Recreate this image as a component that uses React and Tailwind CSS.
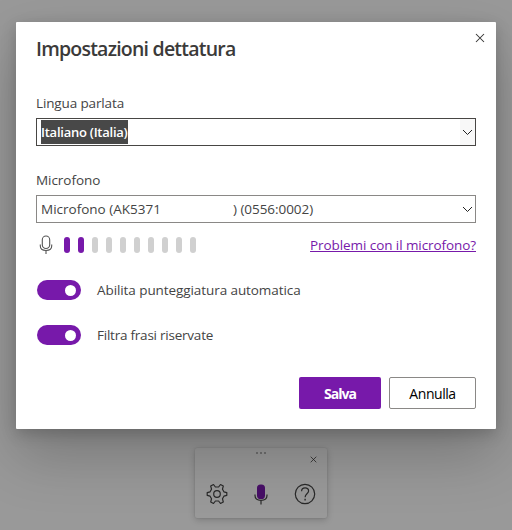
import React from 'react'

const levels = [true, true, false, false, false, false, false, false, false, false]

const toggles = [
  { label: 'Abilita punteggiatura automatica', tracking: 'tracking-[-0.08px]' },
  { label: 'Filtra frasi riservate', tracking: 'tracking-[-0.23px]' },
]

const CloseIcon = ({ size }) => (
  <svg width={size} height={size} viewBox="0 0 10 10" fill="none" stroke="#323130" strokeWidth="1.05">
    <path d="M1 1l8 8M9 1l-8 8" />
  </svg>
)

const ChevronIcon = () => (
  <svg width="11" height="7" viewBox="0 0 11 7" fill="none" stroke="#222" strokeWidth="1">
    <path d="M1 1l4.5 4.5L10 1" />
  </svg>
)

const MicOutline = () => (
  <svg width="14" height="20" viewBox="0 0 14 20" fill="none" stroke="#555" strokeWidth="1.1">
    <rect x="3.3" y="1" width="7.4" height="12.5" rx="3.7" />
    <path d="M1.3 9.5v1.6c0 2.7 2.1 4.4 5.7 4.4s5.7-1.7 5.7-4.4V9.5M7 15.5V19" />
  </svg>
)

const GearIcon = () => (
  <svg width="22" height="22" viewBox="0 0 22 22" fill="none" stroke="#444" strokeWidth="1.2" strokeLinejoin="round">
    <path d="M9.4 4 L7.5 1.5 L4.7 3 L5.5 6.2 L4.1 8.8 L1.2 9.6 V12.4 L4.1 13.2 L5.5 15.8 L4.7 19 L7.5 20.5 L9.4 18 H12.6 L14.5 20.5 L17.3 19 L16.5 15.8 L17.9 13.2 L20.8 12.4 V9.6 L17.9 8.8 L16.5 6.2 L17.3 3 L14.5 1.5 L12.6 4 Z" />
    <circle cx="11" cy="11" r="3.3" />
  </svg>
)

const MicFilled = () => (
  <svg width="14" height="21" viewBox="0 0 14 21" fill="none">
    <rect x="3" y="0.5" width="8" height="14.5" rx="3.6" fill="#7719aa" />
    <path d="M1 10.5v1.1c0 2.9 2.3 4.8 6 4.8s6-1.9 6-4.8v-1.1M7 16.4v4.1" stroke="#444" strokeWidth="1.2" />
  </svg>
)

const HelpIcon = () => (
  <svg width="22" height="22" viewBox="0 0 22 22" fill="none" stroke="#444" strokeWidth="1.2">
    <circle cx="11" cy="11" r="9.7" />
    <path d="M7.6 8.3c0-2 1.4-3.4 3.5-3.4s3.5 1.3 3.5 3.1c0 2.7-3.5 3-3.5 6.2" />
    <path d="M11.1 15.8v1.7" strokeWidth="1.4" />
  </svg>
)

const Toolbar = () => (
  <div className="w-[132px] h-[70px] mt-[448px] ml-[195px] rounded-[2px] bg-white shadow-[0_2px_7px_rgba(0,0,0,0.2),0_0_2px_rgba(0,0,0,0.14)]">
    <div className="flex justify-center gap-[2px] pt-1">
      <span className="w-[2px] h-[2px] bg-[#b8b8b8]"></span>
      <span className="w-[2px] h-[2px] bg-[#b8b8b8]"></span>
      <span className="w-[2px] h-[2px] bg-[#b8b8b8]"></span>
    </div>
    <div className="flex justify-end pr-[10px] pt-[2px]">
      <CloseIcon size={7} />
    </div>
    <div className="flex justify-between items-center px-[11px] mt-[20px]">
      <GearIcon />
      <MicFilled />
      <HelpIcon />
    </div>
  </div>
)

const Dialog = () => (
  <div className="w-[480px] h-[407px] mt-[22px] ml-4 px-5 bg-white rounded-[1px] text-[#444] shadow-[0_25.6px_57.6px_rgba(0,0,0,0.22),0_4.8px_14.4px_rgba(0,0,0,0.18)]">
    <div className="flex justify-between h-[71px]">
      <h1 className="mt-[13px] text-[19.5px] leading-[28px] font-semibold tracking-[-0.78px] text-[#3b3a39] whitespace-nowrap">Impostazioni dettatura</h1>
      <button className="h-[10px] mt-[11px] -mr-[9px]">
        <CloseIcon size={10} />
      </button>
    </div>

    <label className="block h-[25px] text-[13.5px] leading-5 tracking-[-0.13px]">Lingua parlata</label>
    <div className="flex justify-between h-7 border border-[#484644]">
      <span className="h-6 mt-px ml-1 bg-[#484848] text-white text-[13px] leading-6 font-semibold tracking-[-0.25px] w-[87px] whitespace-nowrap">Italiano (Italia)</span>
      <span className="flex w-[15px] items-center justify-center bg-[#f8f8f8]">
        <ChevronIcon />
      </span>
    </div>

    <label className="block h-[25px] mt-6 text-[13.5px] leading-5 tracking-[-0.05px]">Microfono</label>
    <div className="flex justify-between h-7 border border-[#8a8886] text-[13.5px] leading-[26px] whitespace-nowrap">
      <div className="flex ml-1">
        <span className="w-[192px]">Microfono (AK5371</span>
        <span className="tracking-[-0.05px]">) (0556:0002)</span>
      </div>
      <span className="flex w-[15px] items-center justify-center">
        <ChevronIcon />
      </span>
    </div>

    <div className="flex items-center h-[22px] mt-[11px] pl-[3px]">
      <MicOutline />
      <div className="flex gap-2 ml-[11px]">
        {levels.map((on, i) => (
          <span key={i} className={on ? 'w-[6px] h-4 rounded-full bg-[#7719aa]' : 'w-[6px] h-4 rounded-full bg-[#d0d0d0]'}></span>
        ))}
      </div>
      <a className="ml-auto text-[13.5px] leading-5 tracking-[-0.08px] text-[#7719aa] underline whitespace-nowrap">Problemi con il microfono?</a>
    </div>

    <div className="flex flex-col gap-[25px] mt-6 pl-px">
      {toggles.map((t) => (
        <div key={t.label} className="flex items-center h-5 gap-4">
          <span className="flex items-center justify-end w-11 h-5 pr-[5px] rounded-full bg-[#7719aa]">
            <span className="w-[11px] h-[11px] rounded-full bg-white"></span>
          </span>
          <span className={`text-[13.5px] leading-5 whitespace-nowrap ${t.tracking}`}>{t.label}</span>
        </div>
      ))}
    </div>

    <div className="flex justify-end gap-2 mt-8">
      <button className="w-[82px] h-8 rounded-[2px] bg-[#7719aa] text-white text-[14px] font-bold tracking-[-1px]">Salva</button>
      <button className="w-[87px] h-8 rounded-[2px] border border-[#8a8886] text-black text-[14px] font-medium tracking-[-0.45px]">Annulla</button>
    </div>
  </div>
)

const App = () => {
  return (
    <div className="relative flex w-[512px] h-[530px] overflow-hidden bg-white font-['Open_Sans','Noto_Sans',sans-serif]">
      <Toolbar />
      <div className="absolute inset-0 flex items-start bg-black/40">
        <Dialog />
      </div>
    </div>
  )
}

export default App
